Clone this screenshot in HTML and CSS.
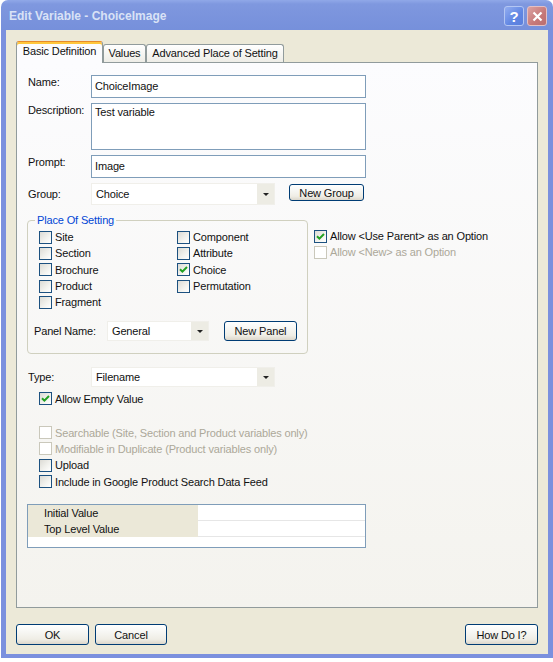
FILE: index.html
```html
<!DOCTYPE html>
<html>
<head>
<meta charset="utf-8">
<title>Edit Variable - ChoiceImage</title>
<link rel="stylesheet" href="styles.css">
</head>
<body>
<div class="window">
  <div class="titlebar">
    <span class="title">Edit Variable - ChoiceImage</span>
    <div class="tbtns">
      <span class="tbtn help">?</span>
      <span class="tbtn close"><svg width="11" height="11" viewBox="0 0 11 11"><path d="M1.5 1.5L9.5 9.5M9.5 1.5L1.5 9.5" stroke="#fff" stroke-width="2.2" fill="none"/></svg></span>
    </div>
  </div>
  <div class="client">
    <div class="tabs">
      <div class="tab active">Basic Definition</div>
      <div class="tab t-values">Values</div>
      <div class="tab t-adv">Advanced Place of Setting</div>
    </div>
    <div class="page">
      <div class="frow">
        <span class="lbl">Name:</span>
        <div class="input">ChoiceImage</div>
      </div>
      <div class="frow gap5">
        <span class="lbl pt2">Description:</span>
        <div class="input textarea">Test variable</div>
      </div>
      <div class="frow gap5">
        <span class="lbl">Prompt:</span>
        <div class="input">Image</div>
      </div>
      <div class="frow gap5 center h22">
        <span class="lbl">Group:</span>
        <div class="combo w184"><span class="ctext">Choice</span><span class="carrow"></span></div>
        <div class="btn b-newgroup">New Group</div>
      </div>

      <div class="posrow">
        <fieldset class="gbox">
          <legend>Place Of Setting</legend>
          <div class="cbgrid">
            <div class="cb"><span class="box"></span>Site</div>
            <div class="cb"><span class="box"></span>Section</div>
            <div class="cb"><span class="box"></span>Brochure</div>
            <div class="cb"><span class="box"></span>Product</div>
            <div class="cb"><span class="box"></span>Fragment</div>
            <div class="cb"><span class="box"></span>Component</div>
            <div class="cb"><span class="box"></span>Attribute</div>
            <div class="cb"><span class="box"><svg class="chk" width="9" height="9" viewBox="0 0 9 9"><path d="M1 4.2L3.4 6.6L8 2" stroke="#21a121" stroke-width="2" fill="none"/></svg></span>Choice</div>
            <div class="cb"><span class="box"></span>Permutation</div>
          </div>
          <div class="panelrow">
            <span class="plbl">Panel Name:</span>
            <div class="combo w102 h20"><span class="ctext">General</span><span class="carrow"></span></div>
            <div class="btn b-newpanel">New Panel</div>
          </div>
        </fieldset>
        <div class="rightopts">
          <div class="cb"><span class="box"><svg class="chk" width="9" height="9" viewBox="0 0 9 9"><path d="M1 4.2L3.4 6.6L8 2" stroke="#21a121" stroke-width="2" fill="none"/></svg></span>Allow &lt;Use Parent&gt; as an Option</div>
          <div class="cb disabled"><span class="box"></span>Allow &lt;New&gt; as an Option</div>
        </div>
      </div>

      <div class="frow center h20 typerow">
        <span class="lbl">Type:</span>
        <div class="combo w184 h20"><span class="ctext">Filename</span><span class="carrow"></span></div>
      </div>

      <div class="checks">
        <div class="cb"><span class="box"><svg class="chk" width="9" height="9" viewBox="0 0 9 9"><path d="M1 4.2L3.4 6.6L8 2" stroke="#21a121" stroke-width="2" fill="none"/></svg></span>Allow Empty Value</div>
        <div class="cb disabled sep"><span class="box"></span>Searchable (Site, Section and Product variables only)</div>
        <div class="cb disabled"><span class="box"></span>Modifiable in Duplicate (Product variables only)</div>
        <div class="cb"><span class="box"></span>Upload</div>
        <div class="cb"><span class="box"></span>Include in Google Product Search Data Feed</div>
      </div>

      <div class="grid">
        <div class="grow"><span class="gname">Initial Value</span><span class="gval"></span></div>
        <div class="grow"><span class="gname">Top Level Value</span><span class="gval"></span></div>
        <div class="grow empty"></div>
      </div>
    </div>
    <div class="footer">
      <div class="btn b-foot">OK</div>
      <div class="btn b-foot b-cancel">Cancel</div>
      <div class="btn b-foot b-how">How Do I?</div>
    </div>
  </div>
</div>
</body>
</html>
```
FILE: styles.css
```css
* { box-sizing: border-box; }

body {
  margin: 0;
  background: #ffffff;
  font-family: "Liberation Sans", Arial, sans-serif;
  font-size: 11px;
  letter-spacing: -0.15px;
  color: #111;
}

.window {
  margin-left: 1px;
  width: 552px;
  height: 658px;
  display: flex;
  flex-direction: column;
}

.titlebar {
  height: 30px;
  flex: none;
  border-radius: 7px 7px 0 0;
  background: linear-gradient(#90a8e8 0, #7f98df 4px, #7b94dd 50%, #7690db 100%);
  display: flex;
  align-items: center;
  padding: 2px 6px 0 8px;
}

.title {
  flex: 1;
  font-weight: bold;
  font-size: 12px;
  letter-spacing: 0;
  color: #d9e2f6;
}

.tbtns {
  display: flex;
  gap: 3px;
}

.tbtn {
  width: 20px;
  height: 20px;
  border-radius: 3px;
  display: flex;
  align-items: center;
  justify-content: center;
  color: #fff;
  font-weight: bold;
  font-size: 15px;
  letter-spacing: 0;
}

.help {
  background: linear-gradient(135deg, #93adf0, #6086e3 60%, #5a7fdc);
  border: 1px solid #b3c6f3;
}

.close {
  background: linear-gradient(135deg, #dba2a2, #c67878 60%, #bb6e70);
  border: 1px solid #e3c0c4;
}

.client {
  flex: 1;
  background: #ece9d8;
  border: solid #7b90de;
  border-width: 0 5px 4px 5px;
  padding: 11px 10px 0 10px;
  display: flex;
  flex-direction: column;
}

/* tabs */
.tabs {
  display: flex;
  align-items: flex-end;
  height: 21px;
  flex: none;
  position: relative;
  z-index: 1;
}

.tab {
  height: 18px;
  border: 1px solid #919b9c;
  border-bottom: none;
  border-radius: 3px 3px 0 0;
  background: linear-gradient(#ffffff, #eeede7);
  display: flex;
  align-items: center;
  justify-content: center;
  padding-bottom: 1px;
}

.tab.active {
  width: 87px;
  height: 22px;
  margin-bottom: -1px;
  background: #fcfcfe;
  border-top: 1px solid #e68b2c;
  box-shadow: inset 0 2px 0 #ffc73c;
  padding-bottom: 3px;
}

.t-values { width: 43px; }
.t-adv { width: 138px; }

.page {
  height: 546px;
  flex: none;
  border: 1px solid #919b9c;
  background: linear-gradient(#fcfcfe, #f4f3ee);
  padding: 12px 0 0 11px;
}

/* form rows */
.frow {
  display: flex;
}

.gap5 { margin-top: 5px; }
.center { align-items: center; }
.h22 { height: 22px; }
.h20 { height: 20px; }

.lbl {
  width: 63px;
  flex: none;
  line-height: 13px;
}

.frow:not(.center) .lbl { padding-top: 1px; }
.lbl.pt2 { padding-top: 2px; }

.input {
  width: 275px;
  height: 23px;
  border: 1px solid #7f9db9;
  background: #fff;
  padding: 0 3px;
  line-height: 21px;
}

.input.textarea {
  height: 47px;
  line-height: 13px;
  padding-top: 2px;
}

.combo {
  height: 22px;
  background: #fff;
  border: 1px solid #f0efea;
  display: flex;
  align-items: stretch;
}

.w184 { width: 184px; }
.w102 { width: 102px; }
.combo.h20 { height: 20px; }

.ctext {
  flex: 1;
  padding-left: 4px;
  display: flex;
  align-items: center;
}

.carrow {
  width: 17px;
  background: #edece4;
  display: flex;
  align-items: center;
  justify-content: center;
}

.carrow::after {
  content: "";
  border-left: 3px solid transparent;
  border-right: 3px solid transparent;
  border-top: 3px solid #222;
  margin-top: 1px;
}

.btn {
  height: 21px;
  border: 1px solid #003c74;
  border-radius: 3px;
  background: linear-gradient(#ffffff 0%, #f7f7f4 35%, #efede5 75%, #dcd7cb 100%);
  display: flex;
  align-items: center;
  justify-content: center;
}

.b-newgroup {
  width: 75px;
  height: 17px;
  margin-left: 14px;
  align-self: flex-start;
  margin-top: 1px;
}

/* place of setting */
.posrow {
  display: flex;
  align-items: flex-start;
  margin-top: 9px;
  margin-left: -1px;
}

.gbox {
  width: 281px;
  margin: 0;
  border: 1px solid #d0d0bf;
  border-radius: 4px;
  padding: 2px 0 12px 11px;
}

.gbox legend {
  margin-left: -4px;
  padding: 0 2px;
  color: #0046d5;
  line-height: 13px;
}

.cbgrid {
  display: grid;
  grid-auto-flow: column;
  grid-template-rows: repeat(5, 16.3px);
  grid-template-columns: 138px 1fr;
}

.cb {
  display: flex;
  align-items: center;
  gap: 3px;
  height: 16.3px;
  white-space: nowrap;
}

.box {
  width: 13px;
  height: 13px;
  flex: none;
  border: 1px solid #1c5180;
  background: linear-gradient(135deg, #dcdbd5, #f3f3ef 60%, #ffffff);
  display: flex;
  align-items: center;
  justify-content: center;
}

.cb.disabled { color: #aca899; }
.cb.disabled .box {
  border-color: #cac8bb;
  background: #fff;
}

.panelrow {
  display: flex;
  align-items: center;
  height: 21px;
  margin-top: 10px;
  margin-left: -5px;
}

.plbl {
  width: 73px;
  flex: none;
}

.b-newpanel {
  width: 73px;
  height: 20px;
  margin-left: 15px;
}

.rightopts {
  margin-left: 6px;
  margin-top: 14px;
}

.typerow {
  margin-top: 13px;
}

.checks {
  margin-top: 3px;
  padding-left: 11px;
}

.cb.sep { margin-top: 17.7px; }

/* value grid */
.grid {
  width: 339px;
  margin-top: 14px;
  margin-left: -1px;
  border: 1px solid #7f9db9;
  background: #fff;
}

.grow {
  display: flex;
  height: 16px;
}

.gname {
  width: 170px;
  flex: none;
  background: #ebe8d8;
  padding-left: 16px;
  display: flex;
  align-items: center;
}

.gval {
  flex: 1;
  border-bottom: 1px solid #e6e6e6;
}

.grow.empty { height: 10px; }

/* footer */
.footer {
  display: flex;
  margin-top: 16px;
}

.b-foot { width: 73px; }
.b-cancel { width: 72px; margin-left: 6px; }
.b-how { margin-left: auto; }
```
